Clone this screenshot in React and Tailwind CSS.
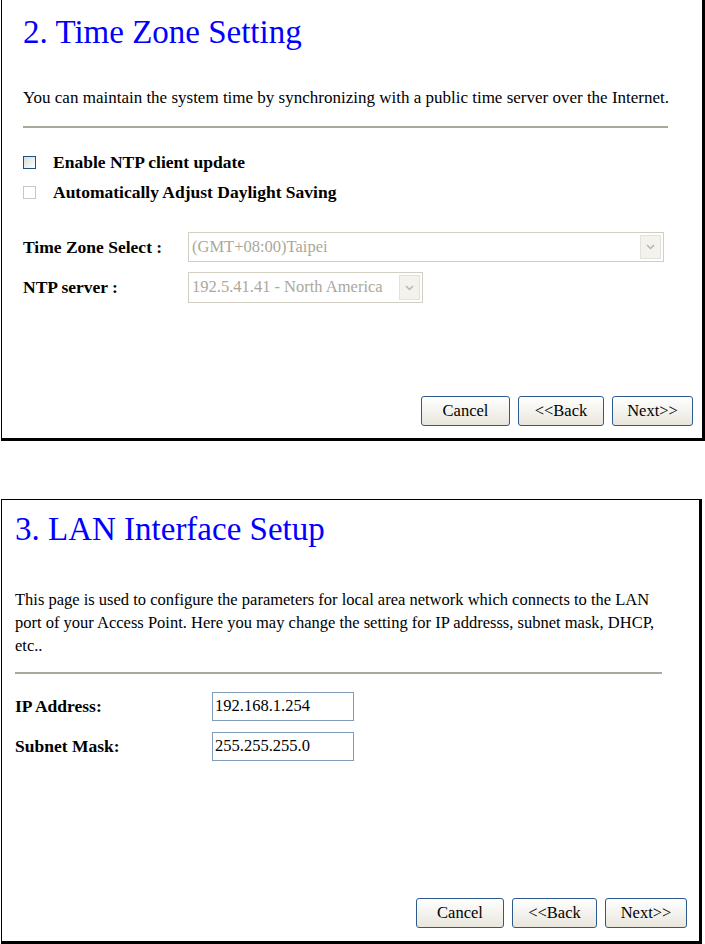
import React from "react";

const serif = { fontFamily: '"Liberation Serif", "Times New Roman", serif' };

function Chevron() {
  return (
    <svg width="9" height="6" viewBox="0 0 9 6" fill="none">
      <path d="M1 1l3.5 3.5L8 1" stroke="#b8b6ab" strokeWidth="1.5" />
    </svg>
  );
}

function DisabledSelect({ value, className }) {
  return (
    <div
      className={`flex h-full items-stretch border border-[#d2cfc2] bg-white p-[2px] ${className}`}
    >
      <div className="flex flex-1 items-center pl-[1px] text-[16.5px] text-[#aca899]">
        {value}
      </div>
      <div className="flex w-[21px] items-center justify-center border border-[#e4e2d8] bg-[#f3f2ec]">
        <Chevron />
      </div>
    </div>
  );
}

function Checkbox({ disabled }) {
  return (
    <span
      className={
        disabled
          ? "block h-[13px] w-[13px] border border-[#cac8bb] bg-white"
          : "block h-[13px] w-[13px] border border-[#1c5180] bg-gradient-to-br from-[#dcdcd7] to-white"
      }
    />
  );
}

function XpButton({ label, width }) {
  return (
    <button
      className={`flex h-[30px] ${width} items-center justify-center rounded-[3px] border border-[#2c5a8c] bg-gradient-to-b from-white to-[#e8e6dc] text-[16.5px] text-black`}
      style={serif}
    >
      {label}
    </button>
  );
}

export default function App() {
  return (
    <div className="h-[944px] w-[705px] overflow-hidden bg-white text-black" style={serif}>
      {/* 2. Time Zone Setting */}
      <div className="ml-[1px] flex h-[441px] w-[704px] flex-col border-b-[3px] border-l border-r-[3px] border-black pl-[21px] pr-[9px]">
        <h1 className="pt-[15px] text-[33px] leading-[34px] text-[#0000ff]">
          2. Time Zone Setting
        </h1>
        <p className="mt-[39px] text-[17px] leading-[20px]">
          You can maintain the system time by synchronizing with a public time server over the Internet.
        </p>
        <div className="mt-[18px] mr-[25px] h-[2px] bg-[#aca899]" />

        <div className="mt-[21px] flex h-[26px] items-center">
          <Checkbox />
          <span className="ml-[17px] text-[17.5px] font-bold">Enable NTP client update</span>
        </div>
        <div className="mt-[4px] flex h-[26px] items-center">
          <Checkbox disabled />
          <span className="ml-[17px] text-[17.5px] font-bold">
            Automatically Adjust Daylight Saving
          </span>
        </div>

        <div className="mt-[27px] flex h-[30px] items-center">
          <span className="w-[165px] text-[17.5px] font-bold">Time Zone Select :</span>
          <DisabledSelect value="(GMT+08:00)Taipei" className="w-[476px]" />
        </div>
        <div className="mt-[10px] flex h-[31px] items-center">
          <span className="w-[165px] text-[17.5px] font-bold">NTP server :</span>
          <DisabledSelect value="192.5.41.41 - North America" className="w-[235px]" />
        </div>

        <div className="mt-auto mb-[12px] flex justify-end gap-[8px]">
          <XpButton label="Cancel" width="w-[89px]" />
          <XpButton label="<<Back" width="w-[86px]" />
          <XpButton label="Next>>" width="w-[81px]" />
        </div>
      </div>

      {/* 3. LAN Interface Setup */}
      <div className="mt-[58px] ml-[1px] flex h-[445px] w-[701px] flex-col border-b-[3px] border-l border-r-[3px] border-t border-black pl-[13px] pr-[12px]">
        <h1 className="pt-[12px] text-[33px] leading-[34px] text-[#0000ff]">
          3. LAN Interface Setup
        </h1>
        <p className="mt-[42px] text-[16.5px] leading-[23px]">
          This page is used to configure the parameters for local area network which connects to the LAN
          <br />
          port of your Access Point. Here you may change the setting for IP addresss, subnet mask, DHCP,
          <br />
          etc..
        </p>
        <div className="mt-[15px] mr-[25px] h-[2px] bg-[#aca899]" />

        <div className="mt-[18px] flex h-[29px] items-center">
          <span className="w-[197px] text-[17.5px] font-bold">IP Address:</span>
          <div className="flex h-full w-[142px] items-center border border-[#7f9db9] pl-[2px] text-[16.5px]">
            192.168.1.254
          </div>
        </div>
        <div className="mt-[11px] flex h-[29px] items-center">
          <span className="w-[197px] text-[17.5px] font-bold">Subnet Mask:</span>
          <div className="flex h-full w-[142px] items-center border border-[#7f9db9] pl-[2px] text-[16.5px]">
            255.255.255.0
          </div>
        </div>

        <div className="mt-auto mb-[13px] flex justify-end gap-[8px]">
          <XpButton label="Cancel" width="w-[88px]" />
          <XpButton label="<<Back" width="w-[85px]" />
          <XpButton label="Next>>" width="w-[82px]" />
        </div>
      </div>
    </div>
  );
}
